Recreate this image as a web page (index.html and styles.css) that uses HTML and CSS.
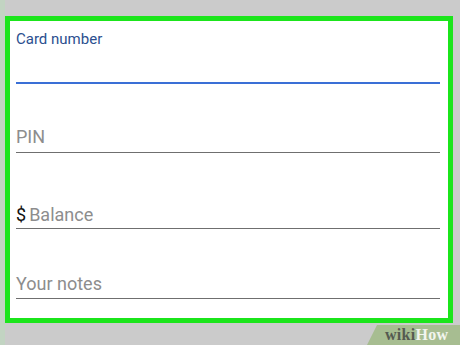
FILE: index.html
```html
<!DOCTYPE html>
<html>
<head>
<meta charset="utf-8">
<link rel="stylesheet" href="styles.css">
</head>
<body>
<div class="frame">
  <div class="card">
    <div class="field field-active">
      <div class="label">Card number</div>
    </div>
    <div class="field field-pin">
      <span class="placeholder">PIN</span>
    </div>
    <div class="field field-balance">
      <span class="prefix">$</span><span class="placeholder">Balance</span>
    </div>
    <div class="field field-notes">
      <span class="placeholder">Your notes</span>
    </div>
  </div>
  <div class="watermark"><span class="wiki">wiki</span><span class="how">How</span></div>
</div>
</body>
</html>
```
FILE: styles.css
```css
html, body {
  margin: 0;
  padding: 0;
}
body {
  width: 460px;
  height: 345px;
  overflow: hidden;
  background: #cbcbcb;
  font-family: Roboto, "Liberation Sans", sans-serif;
}
.frame {
  position: relative;
  width: 460px;
  height: 345px;
  padding: 16px 0 0 5px;
  box-sizing: border-box;
  background: linear-gradient(to right, #c2d4c2 0, #c2d4c2 5px, #cbcbcb 5px);
}
.card {
  width: 448px;
  height: 307px;
  box-sizing: border-box;
  border: 5px solid #1be51b;
  background: #ffffff;
  padding: 10px 8px 0 6px;
  display: flex;
  flex-direction: column;
}
.field {
  display: flex;
  align-items: baseline;
  border-bottom: 1px solid #6f6f6f;
}
.field-active {
  height: 51px;
  align-items: flex-start;
  border-bottom: 2px solid #3a6fd6;
}
.label {
  font-size: 15px;
  line-height: 16px;
  color: #2b4f8f;
}
.placeholder, .prefix {
  font-size: 18px;
  line-height: 20px;
  color: #8d8d8d;
}
.prefix {
  color: #111111;
  margin-right: 3px;
}
.field-pin {
  margin-top: 43px;
  padding-bottom: 5px;
}
.field-balance {
  margin-top: 52px;
  padding-bottom: 3px;
}
.field-notes {
  margin-top: 45px;
  padding-bottom: 4px;
}
.watermark {
  position: absolute;
  right: 0;
  bottom: 0;
  width: 93px;
  height: 20px;
  background: #a7bd91;
  clip-path: polygon(10px 0, 100% 0, 100% 100%, 0 100%);
  font-family: "Liberation Serif", serif;
  font-weight: bold;
  font-size: 16px;
  line-height: 20px;
  padding-left: 18px;
  box-sizing: border-box;
  letter-spacing: 0.3px;
}
.wiki {
  color: #555a50;
}
.how {
  color: #f2f5ee;
}
```
